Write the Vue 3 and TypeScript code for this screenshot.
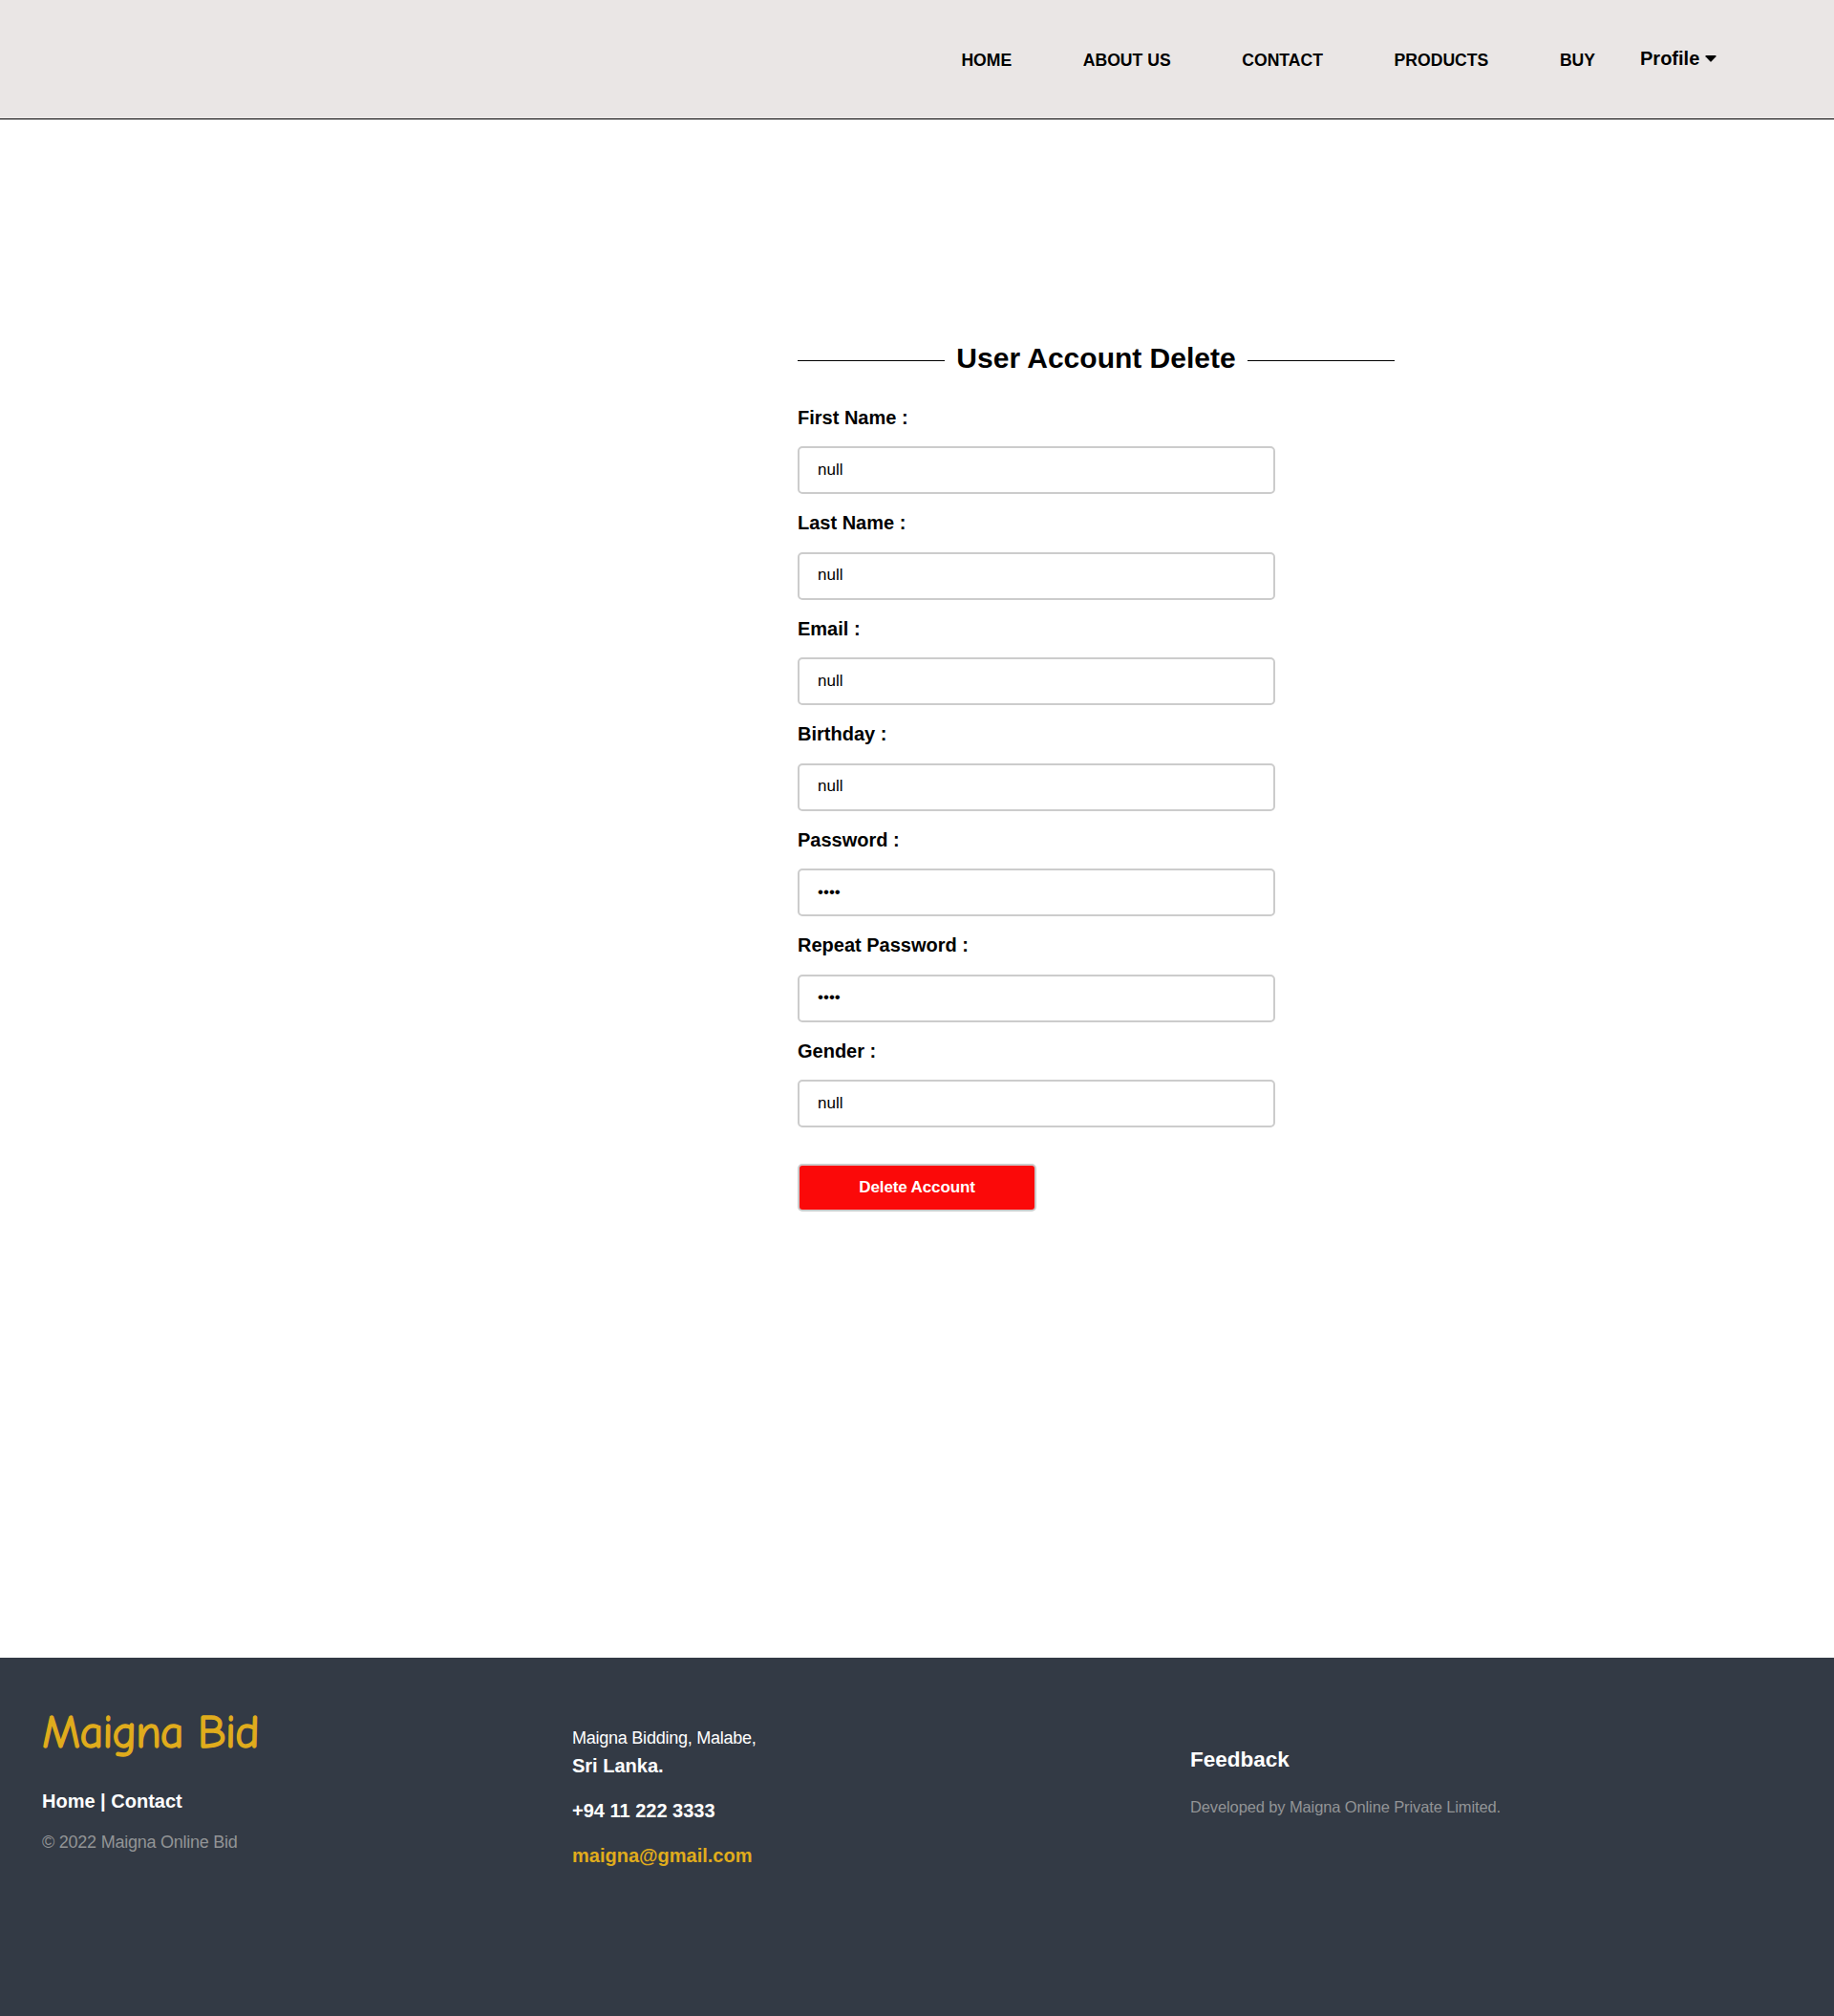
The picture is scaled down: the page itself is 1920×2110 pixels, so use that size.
<script setup lang="ts">
import { ref } from 'vue'

interface Field {
  label: string
  type: 'text' | 'password'
  value: string
}

const links: string[] = ['HOME', 'ABOUT US', 'CONTACT', 'PRODUCTS', 'BUY']

const fields = ref<Field[]>([
  { label: 'First Name :', type: 'text', value: 'null' },
  { label: 'Last Name :', type: 'text', value: 'null' },
  { label: 'Email :', type: 'text', value: 'null' },
  { label: 'Birthday :', type: 'text', value: 'null' },
  { label: 'Password :', type: 'password', value: 'null' },
  { label: 'Repeat Password :', type: 'password', value: 'null' },
  { label: 'Gender :', type: 'text', value: 'null' },
])
</script>

<template>
  <div class="page">
    <header class="header">
      <nav class="nav">
        <a v-for="link in links" :key="link" class="nav-link">{{ link }}</a>
      </nav>
      <div class="profile">
        <span>Profile</span>
        <svg class="caret" width="12" height="7" viewBox="0 0 12 7">
          <path d="M1 0H11Q12 .3 11.4 1.2L6.7 6.3Q6 7 5.3 6.3L.6 1.2Q0 .3 1 0Z" />
        </svg>
      </div>
    </header>

    <main class="main">
      <form class="form" @submit.prevent>
        <h1 class="title"><span>User Account Delete</span></h1>
        <div v-for="field in fields" :key="field.label" class="field">
          <label class="label">{{ field.label }}</label>
          <input v-model="field.value" class="input" :type="field.type" />
        </div>
        <button class="delete" type="submit">Delete Account</button>
      </form>
    </main>

    <footer class="footer">
      <section class="brand">
        <div class="logo">Maigna Bid</div>
        <div class="footer-links">Home | Contact</div>
        <div class="copyright">© 2022 Maigna Online Bid</div>
      </section>
      <section class="contact">
        <div class="street">Maigna Bidding, Malabe,</div>
        <div class="strong">Sri Lanka.</div>
        <div class="strong">+94 11 222 3333</div>
        <div class="strong mail">maigna@gmail.com</div>
      </section>
      <section class="feedback">
        <div class="feedback-title">Feedback</div>
        <div class="developed">Developed by Maigna Online Private Limited.</div>
      </section>
    </footer>
  </div>
</template>

<style>
body {
  margin: 0;
  background: #fff;
}
</style>

<style scoped>
.page {
  display: flex;
  flex-direction: column;
  width: 1920px;
  height: 2110px;
  overflow: hidden;
  font-family: Arial, 'Liberation Sans', sans-serif;
  color: #000;
}
.header {
  box-sizing: border-box;
  display: flex;
  flex: none;
  height: 125px;
  padding-left: 1006.4px;
  background: #eae6e5;
  border-bottom: 1px solid #000;
  font-weight: bold;
}
.nav {
  display: flex;
  gap: 74.6px;
  padding-top: 53px;
  font-size: 17.6px;
  line-height: 20px;
}
.profile {
  display: flex;
  margin-left: 47px;
  padding-top: 50px;
  font-size: 20px;
  line-height: 23px;
}
.caret {
  margin: 8px 0 0 6px;
}
.main {
  flex: none;
  height: 1610px;
}
.form {
  display: flex;
  flex-direction: column;
  width: 625px;
  margin-left: 835px;
  padding-top: 233px;
}
.title {
  display: flex;
  align-items: flex-start;
  gap: 12px;
  height: 34px;
  margin: 0 0 34px;
  font-size: 30px;
  line-height: 34px;
}
.title::before,
.title::after {
  content: '';
  flex: 1;
  height: 1px;
  margin-top: 19px;
  background: #000;
}
.field {
  display: flex;
  flex-direction: column;
  height: 110.5px;
}
.label {
  margin: -0.25px 0 18.25px;
  font-size: 20px;
  font-weight: bold;
  line-height: 23px;
}
.input {
  box-sizing: border-box;
  width: 500px;
  height: 50px;
  padding: 0 19px 1px;
  border: 2px solid #ccc;
  border-radius: 5px;
  background: #fff;
  color: #000;
  font-family: inherit;
  font-size: 17px;
  outline: none;
}
.delete {
  box-sizing: border-box;
  width: 250px;
  height: 50px;
  margin-top: 18.5px;
  padding: 0 0 1px;
  border: 2px solid #ccc;
  border-radius: 5px;
  background: #fb0909;
  color: #fff;
  font-family: inherit;
  font-size: 17px;
  font-weight: bold;
  letter-spacing: -0.12px;
}
.footer {
  display: flex;
  flex: none;
  height: 375px;
  padding-left: 44px;
  background: #333a45;
  color: #fff;
}
.brand {
  width: 555px;
  padding-top: 51px;
}
.logo {
  color: #e0ac1c;
  font-family: 'Comic Sans MS', 'Comic Neue', cursive;
  font-size: 48px;
  letter-spacing: -0.8px;
  line-height: 56px;
  -webkit-text-stroke: 1.4px #e0ac1c;
}
.footer-links {
  margin-top: 32px;
  font-size: 20px;
  font-weight: bold;
  line-height: 23px;
}
.copyright {
  margin-top: 21px;
  color: #929496;
  font-size: 18px;
  letter-spacing: -0.24px;
  line-height: 20px;
}
.contact {
  width: 647px;
  padding-top: 74px;
}
.street {
  margin-bottom: 8px;
  font-size: 18px;
  letter-spacing: -0.24px;
  line-height: 20px;
}
.strong {
  margin-bottom: 24px;
  font-size: 20px;
  font-weight: bold;
  line-height: 23px;
}
.mail {
  color: #e0ac1c;
}
.feedback {
  padding-top: 94px;
}
.feedback-title {
  font-size: 22.5px;
  font-weight: bold;
  line-height: 26px;
}
.developed {
  margin-top: 27px;
  color: #929496;
  font-size: 16.5px;
  letter-spacing: -0.12px;
  line-height: 19px;
}
</style>
